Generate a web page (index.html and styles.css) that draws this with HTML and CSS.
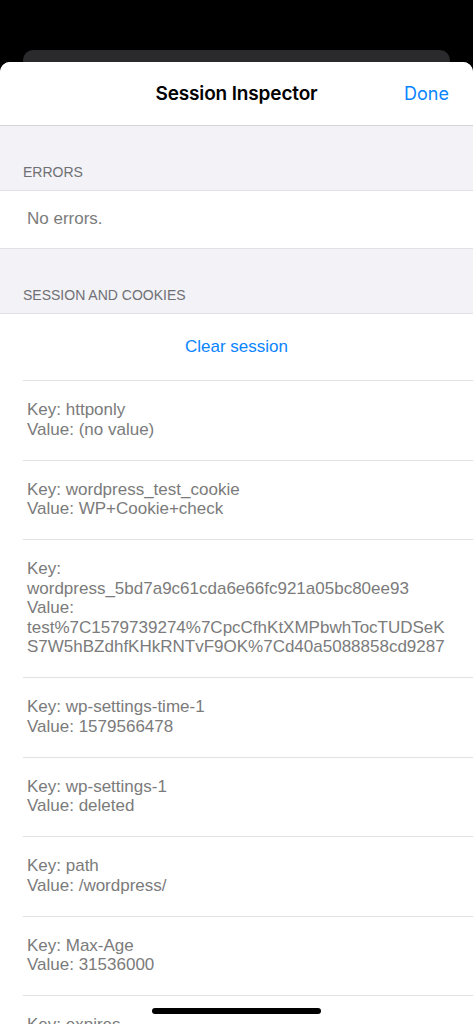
FILE: index.html
```html
<!DOCTYPE html>
<html>
<head>
<meta charset="utf-8">
<link rel="stylesheet" href="styles.css">
</head>
<body>
<div class="backcard"></div>
<div class="sheet">
  <header class="navbar">
    <div class="nav-title">Session Inspector</div>
    <div class="nav-done">Done</div>
  </header>

  <div class="section-header">ERRORS</div>
  <div class="group">
    <div class="plain-row">No errors.</div>
  </div>

  <div class="section-header">SESSION AND COOKIES</div>
  <div class="group">
    <div class="action-row">Clear session</div>
    <div class="kv-row">Key: httponly<br>Value: (no value)</div>
    <div class="kv-row">Key: wordpress_test_cookie<br>Value: WP+Cookie+check</div>
    <div class="kv-row">Key:<br>wordpress_5bd7a9c61cda6e66fc921a05bc80ee93<br>Value:<br>test%7C1579739274%7CpcCfhKtXMPbwhTocTUDSeK<br>S7W5hBZdhfKHkRNTvF9OK%7Cd40a5088858cd9287</div>
    <div class="kv-row">Key: wp-settings-time-1<br>Value: 1579566478</div>
    <div class="kv-row">Key: wp-settings-1<br>Value: deleted</div>
    <div class="kv-row">Key: path<br>Value: /wordpress/</div>
    <div class="kv-row">Key: Max-Age<br>Value: 31536000</div>
    <div class="kv-row">Key: expires<br>Value: Wed, 20 Jan 2021</div>
  </div>
</div>
<div class="home-indicator"></div>
</body>
</html>
```

FILE: styles.css
```css
html, body {
  margin: 0;
  padding: 0;
  background: #000;
  height: 1024px;
  overflow: hidden;
}
body {
  font-family: "Liberation Sans", Arial, sans-serif;
  position: relative;
}
.backcard {
  margin: 50px 23px 0;
  height: 12px;
  background: #2a2a2c;
  border-radius: 10px 10px 0 0;
}
.sheet {
  background: #f2f2f7;
  border-radius: 10px 10px 0 0;
  overflow: hidden;
  min-height: 962px;
}
.navbar {
  height: 64px;
  background: #fff;
  border-bottom: 1px solid #d4d4d8;
  box-sizing: border-box;
  display: flex;
  align-items: center;
  justify-content: center;
  position: relative;
}
.nav-title {
  font-family: Inter, "Liberation Sans", sans-serif;
  font-weight: 600;
  font-size: 19px;
  color: #000;
  letter-spacing: -0.15px;
}
.nav-done {
  position: absolute;
  right: 24px;
  top: 0;
  bottom: 0;
  display: flex;
  align-items: center;
  font-family: Inter, "Liberation Sans", sans-serif;
  font-size: 18px;
  color: #0a84ff;
}
.section-header {
  height: 64px;
  box-sizing: border-box;
  padding: 37px 23px 0;
  font-size: 14px;
  line-height: 18px;
  color: #707074;
}
.group {
  background: #fff;
  border-top: 1px solid #e2e2e6;
  border-bottom: 1px solid #e2e2e6;
}
.plain-row {
  height: 57px;
  display: flex;
  align-items: center;
  padding-left: 27px;
  font-size: 17px;
  color: #7b7b7b;
  padding-bottom: 2px;
  box-sizing: border-box;
}
.action-row {
  height: 67px;
  display: flex;
  align-items: center;
  justify-content: center;
  font-size: 17px;
  color: #0a84ff;
  border-bottom: 1px solid #e2e2e6;
  margin-left: 23px;
  padding-right: 23px;
  box-sizing: border-box;
}
.kv-row {
  margin-left: 23px;
  padding: 19px 16px 20.5px 4px;
  font-size: 17px;
  line-height: 19.5px;
  color: #7b7b7b;
  border-bottom: 1px solid #e2e2e6;
}
.kv-row:last-child {
  border-bottom: none;
}
.home-indicator {
  position: absolute;
  left: 152px;
  top: 1008px;
  width: 169px;
  height: 6px;
  border-radius: 3px;
  background: #000;
}
```
